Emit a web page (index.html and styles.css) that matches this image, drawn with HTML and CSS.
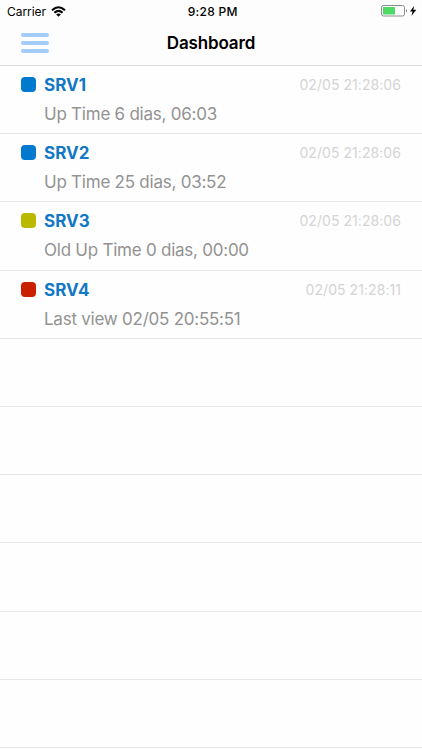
FILE: index.html
```html
<!DOCTYPE html>
<html lang="en">
<head>
<meta charset="utf-8">
<title>Dashboard</title>
<link rel="stylesheet" href="styles.css">
</head>
<body>
<header class="top">
  <div class="status">
    <div class="carrier"><span class="carrier-name">Carrier</span>
      <svg class="wifi" width="15" height="11" viewBox="0 0 15 11" fill="none" stroke="#000" stroke-width="2"><path d="M1 4.2Q7.5-1.8 14 4.2M3.4 6.7Q7.5 3 11.6 6.7"/><path d="M5.2 8.4Q7.5 6.5 9.8 8.4L7.5 10.8Z" fill="#000" stroke="none"/></svg>
    </div>
    <span class="time">9:28 PM</span>
    <svg class="battery" width="37" height="12" viewBox="0 0 37 12"><rect x="1.5" y=".5" width="23" height="10.5" rx="2" fill="#fff" stroke="#8c8c8c"/><rect x="3" y="2" width="12" height="7.5" rx=".5" fill="#4cd964"/><path d="M26 4Q28 5.8 26 7.6Z" fill="#777"/><path d="M34.2.8L30 6.4h2.6L31.4 11 36.3 4.8h-3Z"/></svg>
  </div>
  <nav class="nav">
    <div class="menu"><i></i><i></i><i></i></div>
    <h1 class="title">Dashboard</h1>
  </nav>
</header>
<main class="list">
  <section class="row"><i class="dot blue"></i><div class="info"><div class="line"><b class="name">SRV1</b><time class="date">02/05 21:28:06</time></div><p class="detail"><span>Up Time 6 dias, 06:03</span></p></div></section>
  <section class="row"><i class="dot blue"></i><div class="info"><div class="line"><b class="name">SRV2</b><time class="date">02/05 21:28:06</time></div><p class="detail"><span>Up Time 25 dias, 03:52</span></p></div></section>
  <section class="row"><i class="dot olive"></i><div class="info"><div class="line"><b class="name">SRV3</b><time class="date">02/05 21:28:06</time></div><p class="detail"><span>Old Up Time 0 dias, 00:00</span></p></div></section>
  <section class="row"><i class="dot red"></i><div class="info"><div class="line"><b class="name">SRV4</b><time class="date">02/05 21:28:11</time></div><p class="detail"><span>Last view 02/05 20:55:51</span></p></div></section>
  <section class="row"></section>
  <section class="row"></section>
  <section class="row"></section>
  <section class="row"></section>
  <section class="row"></section>
  <section class="row"></section>
</main>
</body>
</html>
```
FILE: styles.css
```css
* { box-sizing: border-box; }
body { margin: 0; height: 750px; overflow: hidden; background: #fefefe; color: #000; font-family: Inter, "Liberation Sans", sans-serif; }
.top { height: 66px; background: #fdfdfd; border-bottom: 1px solid #dadada; }
.status { height: 22px; display: grid; grid-template-columns: 1fr auto 1fr; align-items: center; padding: 0 5px 0 7px; }
.carrier { display: flex; align-items: center; gap: 5px; font-size: 12px; letter-spacing: -.05px; }
.time { font-size: 12px; font-weight: 500; letter-spacing: .3px; transform: translateX(.7px); }
.battery { justify-self: end; }
.nav { height: 42px; padding: 0 21px; display: grid; grid-template-columns: 1fr auto 1fr; align-items: center; }
.menu { display: flex; flex-direction: column; gap: 4px; width: 28px; }
.menu i { height: 4px; border-radius: 2px; background: #a3ccf9; }
.title { margin: 0; grid-column: 2; font-size: 17px; font-weight: 600; letter-spacing: -.15px; }
.row { height: 68.2px; border-bottom: 1px solid #e6e6e6; padding: 8px 21px 0; display: flex; gap: 8px; }
.dot { width: 15px; height: 15px; margin-top: 3px; border-radius: 4px; }
.blue { background: #0079cf; }
.olive { background: #b9b900; }
.red { background: #c92100; }
.info { flex: 1; }
.line { display: flex; justify-content: space-between; align-items: flex-start; height: 22px; line-height: 22px; }
.name { font-size: 17px; font-weight: 700; color: #1277c4; }
.date { font-size: 14px; letter-spacing: .06px; line-height: 21px; color: #d4d4d4; }
.detail { margin: 7px 0 0; font-size: 17px; line-height: 22px; letter-spacing: -.24px; color: #929292; }
```
